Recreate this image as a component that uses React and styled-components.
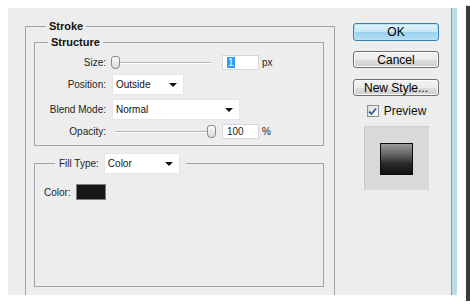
import React from "react";
import styled, { createGlobalStyle } from "styled-components";

const GlobalStyle = createGlobalStyle`
  html, body {
    margin: 0;
    padding: 0;
    background: #fff;
  }
  body {
    font-family: "Liberation Sans", Arial, sans-serif;
  }
`;

const Frame = styled.div`
  width: 466px;
  height: 301px;
  box-sizing: border-box;
  padding: 8px 0 0 8px;
  background: #fff;
  box-shadow: 4px 6px 1px #3a3a3a;
  display: flex;
  align-items: flex-start;
`;

const Dialog = styled.div`
  width: 443px;
  height: 287px;
  box-sizing: border-box;
  padding: 12px 12px 0 17px;
  background: #ededed;
  overflow: hidden;
  display: flex;
  align-items: flex-start;
  gap: 18px;
  font-size: 10px;
  color: #1e1e1e;
`;

const WindowEdge = styled.div`
  width: 6px;
  height: 287px;
  background: #bcdcec;
  border-left: 1px solid #8d9ba4;
  box-sizing: border-box;
`;

const Group = styled.fieldset`
  margin: 0;
  min-width: 0;
  box-sizing: border-box;
  border: 1px solid #a3a3a3;
  ${(p) => p.$open && "border-bottom: none;"}
  padding: ${(p) => p.$pad};
  height: ${(p) => p.$height || "auto"};
`;

const Legend = styled.legend`
  margin-left: ${(p) => p.$offset}px;
  padding: 0 3px;
  line-height: 13px;
  font-size: 11px;
  font-weight: bold;
  color: #111;
`;

const FillLegend = styled.legend`
  margin-left: 11px;
  padding: 0 6px 0 4px;
  display: flex;
  align-items: center;
  gap: 5px;
  font-size: 10px;
`;

const LeftColumn = styled.div`
  width: 310px;
  flex: none;
`;

const Rows = styled.div`
  display: flex;
  flex-direction: column;
  gap: 4px;
`;

const Row = styled.div`
  display: grid;
  grid-template-columns: 71px auto;
  column-gap: ${(p) => p.$gap || 6}px;
  align-items: center;
  height: ${(p) => p.$h}px;
`;

const Label = styled.span`
  text-align: right;
  white-space: nowrap;
`;

const Controls = styled.div`
  display: flex;
  align-items: center;
`;

const Slider = styled.div`
  position: relative;
  width: ${(p) => p.$w}px;
  height: 13px;
  margin-right: ${(p) => p.$mr}px;

  &::before {
    content: "";
    position: absolute;
    left: 4px;
    right: 2px;
    top: 6px;
    height: 0;
    border-top: 1px solid #b4b4b4;
    border-bottom: 1px solid #fff;
  }
`;

const Thumb = styled.div`
  position: absolute;
  top: 0;
  width: 7px;
  height: 11px;
  border: 1px solid #8c8c8c;
  border-radius: 3px 3px 4px 4px;
  background: linear-gradient(#fdfdfd, #d9d9d9);
`;

const NumBox = styled.div`
  width: 37px;
  height: 15px;
  box-sizing: border-box;
  background: #fff;
  border: 1px solid #cfd8e2;
  padding-left: 4px;
  display: flex;
  align-items: center;
  font-size: 10px;
`;

const Selected = styled.span`
  background: #3399ff;
  color: #fff;
  padding: 0 1px;
  line-height: 11px;
`;

const Unit = styled.span`
  margin-left: 3px;
`;

const Select = styled.div`
  position: relative;
  width: ${(p) => p.$w}px;
  height: 21px;
  box-sizing: border-box;
  background: #fff;
  border: 1px solid #e6e6e6;
  padding-left: 3px;
  display: flex;
  align-items: center;
  font-size: 10px;
  color: #111;

  &::after {
    content: "";
    position: absolute;
    right: 6px;
    top: 8px;
    border-left: 4px solid transparent;
    border-right: 4px solid transparent;
    border-top: 4px solid #111;
  }
`;

const ColorRow = styled.div`
  display: flex;
  align-items: center;
  gap: 5px;
`;

const Swatch = styled.div`
  width: 30px;
  height: 16px;
  box-sizing: border-box;
  background: #161616;
  border: 1px solid #7c7c7c;
`;

const RightColumn = styled.div`
  width: 86px;
  flex: none;
  padding-top: 3px;
  display: flex;
  flex-direction: column;
  align-items: center;
`;

const Button = styled.div`
  width: 86px;
  height: ${(p) => (p.$primary ? 18 : 17)}px;
  margin-bottom: ${(p) => (p.$primary ? 10 : 11)}px;
  box-sizing: border-box;
  border: 1px solid ${(p) => (p.$primary ? "#3c7fb1" : "#707070")};
  border-radius: 3px;
  background: ${(p) =>
    p.$primary
      ? "linear-gradient(#e5f4fc 0%, #c4e5f6 50%, #98d1ef 51%, #b9def2 100%)"
      : "linear-gradient(#f2f2f2 0%, #ebebeb 50%, #dddddd 51%, #cfcfcf 100%)"};
  box-shadow: inset 0 0 0 1px ${(p) => (p.$primary ? "#b9e2f7" : "#fcfcfc")};
  display: flex;
  align-items: center;
  justify-content: center;
  font-size: 12px;
  color: #000;
`;

const CheckRow = styled.div`
  margin-top: -3px;
  display: flex;
  align-items: center;
  gap: 5px;
  font-size: 12px;
  color: #111;
  margin-left: 1px;
`;

const CheckBox = styled.div`
  width: 12px;
  height: 12px;
  box-sizing: border-box;
  border: 1px solid #8e8f8f;
  background: linear-gradient(135deg, #dcdcdc, #fbfbfb);
  display: flex;
  align-items: center;
  justify-content: center;
`;

const PreviewBox = styled.div`
  margin-top: 8px;
  width: 65px;
  height: 64px;
  box-sizing: border-box;
  background: #d9d9d9;
  border-left: 1px solid #c8c8c8;
  border-top: 1px solid #cfcfcf;
  display: flex;
  align-items: center;
  justify-content: center;
`;

const PreviewSwatch = styled.div`
  width: 33px;
  height: 32px;
  box-sizing: border-box;
  border: 1px solid #0c0c0c;
  background: linear-gradient(#9a9a9a 0%, #5c5c5c 40%, #2a2a2a 65%, #111 100%);
`;

export default function App() {
  return (
    <>
      <GlobalStyle />
      <Frame>
        <Dialog>
          <LeftColumn>
            <Group $pad="3px 10px 0 8px" $height="320px" $open>
              <Legend $offset={12}>Stroke</Legend>
              <Group $pad="6px 0 6px 0">
                <Legend $offset={13}>Structure</Legend>
                <Rows>
                  <Row $h={15} $gap={5}>
                    <Label>Size:</Label>
                    <Controls>
                      <Slider $w={102} $mr={9}>
                        <Thumb style={{ left: 0 }} />
                      </Slider>
                      <NumBox>
                        <Selected>1</Selected>
                      </NumBox>
                      <Unit>px</Unit>
                    </Controls>
                  </Row>
                  <Row $h={21}>
                    <Label>Position:</Label>
                    <Controls>
                      <Select $w={72}>Outside</Select>
                    </Controls>
                  </Row>
                  <Row $h={21}>
                    <Label>Blend Mode:</Label>
                    <Controls>
                      <Select $w={128}>Normal</Select>
                    </Controls>
                  </Row>
                  <Row $h={15}>
                    <Label>Opacity:</Label>
                    <Controls>
                      <Slider $w={104} $mr={6}>
                        <Thumb style={{ left: 95 }} />
                      </Slider>
                      <NumBox>100</NumBox>
                      <Unit>%</Unit>
                    </Controls>
                  </Row>
                </Rows>
              </Group>
              <div style={{ height: 7 }} />
              <Group $pad="10px 0 0 9px" $height="134px">
                <FillLegend>
                  Fill Type:
                  <Select $w={76}>Color</Select>
                </FillLegend>
                <ColorRow>
                  Color:
                  <Swatch />
                </ColorRow>
              </Group>
            </Group>
          </LeftColumn>
          <RightColumn>
            <Button $primary>OK</Button>
            <Button>Cancel</Button>
            <Button>New Style...</Button>
            <CheckRow>
              <CheckBox>
                <svg width="9" height="9" viewBox="0 0 9 9">
                  <path
                    d="M1 4.5 L3.5 7 L8 1.5"
                    fill="none"
                    stroke="#3d5a98"
                    strokeWidth="1.8"
                  />
                </svg>
              </CheckBox>
              Preview
            </CheckRow>
            <PreviewBox>
              <PreviewSwatch />
            </PreviewBox>
          </RightColumn>
        </Dialog>
        <WindowEdge />
      </Frame>
    </>
  );
}
